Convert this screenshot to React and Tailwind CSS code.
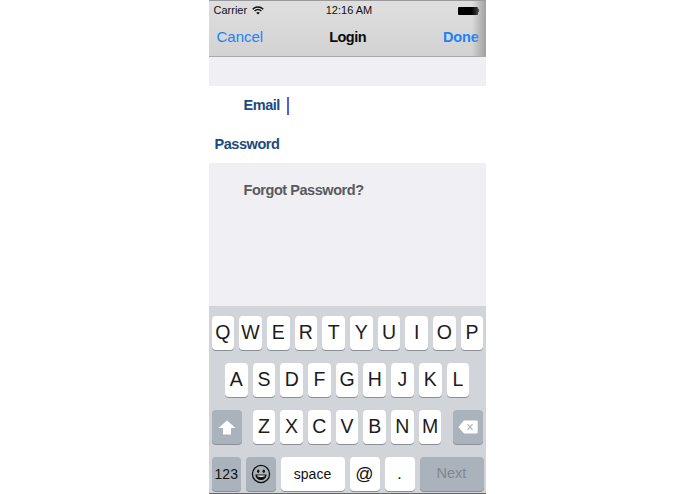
const font = 'font-["Liberation_Sans",Arial,sans-serif]'

function Key({ label, className = '' }) {
  return (
    <div className={`h-[34px] w-[22.7px] shrink-0 rounded-[4px] bg-white shadow-[0_1px_0_#8c9096] flex items-center justify-center text-[19.5px] text-[#1c1c1c] ${className}`}>
      {label}
    </div>
  )
}

function DarkKey({ children, className = '' }) {
  return (
    <div className={`h-[34px] shrink-0 rounded-[4px] bg-[#aab2bb] shadow-[0_1px_0_#8c9096] flex items-center justify-center ${className}`}>
      {children}
    </div>
  )
}

function Wifi() {
  return (
    <svg width="12" height="9" viewBox="0 0 12 9" fill="none" stroke="#111" strokeWidth="1.4">
      <path d="M0.7 3.2C3.8 0.3 8.2 0.3 11.3 3.2" />
      <path d="M2.6 5C4.6 3.2 7.4 3.2 9.4 5" />
      <path d="M6 8.6L4.2 6.7C5.3 5.8 6.7 5.8 7.8 6.7Z" fill="#111" stroke="none" />
    </svg>
  )
}

function Smiley() {
  return (
    <svg width="20" height="20" viewBox="0 0 20 20" fill="none">
      <circle cx="10" cy="10" r="8.6" stroke="#111" strokeWidth="1.3" />
      <ellipse cx="7.2" cy="7.3" rx="1.2" ry="1.7" fill="#111" />
      <ellipse cx="12.8" cy="7.3" rx="1.2" ry="1.7" fill="#111" />
      <path d="M4.4 10.6H15.6C15.4 14.2 13 16.1 10 16.1C7 16.1 4.6 14.2 4.4 10.6Z" fill="#111" />
      <path d="M6 11.6H14C13.7 12.6 12.6 13 10 13C7.4 13 6.3 12.6 6 11.6Z" fill="#fff" />
    </svg>
  )
}

export default function App() {
  return (
    <div className={`w-[695px] h-[494px] bg-white flex justify-center overflow-hidden ${font}`}>
      <div className="w-[277px] ml-[-1px] h-[494px] flex flex-col">
        <div className="relative h-[57px] shrink-0 border-t border-b border-t-[#9a9a9a] border-b-[#a9a9a9] bg-gradient-to-b from-[#dfdfdf] to-[#d2d2d2]">
          <div className="h-[19px] flex items-center justify-between pl-[5px] pr-[5px] text-[11px] text-[#111]">
            <div className="w-[88px] flex items-center gap-[5px]">
              <span>Carrier</span>
              <Wifi />
            </div>
            <span className="font-medium ml-[4px]">12:16 AM</span>
            <div className="w-[88px] flex justify-end pr-[1px]">
              <div className="flex items-center">
                <div className="w-5 h-[8px] bg-black rounded-[1px]"></div>
                <div className="w-[1px] h-[3px] bg-black"></div>
              </div>
            </div>
          </div>
          <div className="h-9 flex items-center justify-between pl-2 pr-[7px] text-[15px]">
            <span className="text-[#1a82fb] mb-[1px]">Cancel</span>
            <span className="font-bold text-[14.5px] tracking-[-0.5px] text-[#0b0b0b] ml-[-3px] mr-[8px]">Login</span>
            <span className="font-bold text-[14.5px] tracking-[-0.2px] text-[#1a82fb]">Done</span>
          </div>
          <div className="absolute inset-y-0 right-0 w-[14px] bg-gradient-to-r from-transparent to-[#a0a0a0]"></div>
        </div>

        <div className="h-[29px] shrink-0 bg-[#efeff4]"></div>

        <div className="h-[77px] shrink-0 bg-white text-[14.5px] tracking-[-0.45px] font-bold text-[#1a4a80]">
          <div className="h-[40px] flex items-center pl-[35px] gap-[7px]">
            <span>Email</span>
            <div className="w-[2px] h-[18px] bg-[#4a62e8]"></div>
          </div>
          <div className="h-[37px] flex items-center pl-[6px] pt-[1px]">Password</div>
        </div>

        <div className="flex-1 bg-[#efeff4] pl-[35px] pt-[19px] text-[14.5px] tracking-[-0.45px] leading-[17px] font-bold text-[#5a5a5e]">
          Forgot Password?
        </div>

        <div className="h-[188px] shrink-0 bg-[#d1d5da] flex flex-col gap-[13px] pt-[10px] border-b border-[#666]">
          <div className="flex gap-[5px] pl-[3px]">
            {'QWERTYUIOP'.split('').map((k) => <Key key={k} label={k} />)}
          </div>
          <div className="flex gap-[5px] pl-[16.5px]">
            {'ASDFGHJKL'.split('').map((k) => <Key key={k} label={k} />)}
          </div>
          <div className="flex pl-[3px] pr-[3px] justify-between">
            <DarkKey className="w-[30px]">
              <svg width="18" height="15" viewBox="0 0 18 15"><path d="M9 0.5L17.5 8H13V14.5H5V8H0.5Z" fill="#fff" /></svg>
            </DarkKey>
            <div className="flex gap-[5px]">
              {'ZXCVBNM'.split('').map((k) => <Key key={k} label={k} />)}
            </div>
            <DarkKey className="w-[30px]">
              <svg width="20" height="14" viewBox="0 0 20 14">
                <path d="M6 0.5H18.5C19.3 0.5 19.7 1 19.7 1.7V12.3C19.7 13 19.3 13.5 18.5 13.5H6L0.3 7Z" fill="#fff" />
                <path d="M9.5 4.2L14.5 9.8M14.5 4.2L9.5 9.8" stroke="#aab2bb" strokeWidth="1.2" />
              </svg>
            </DarkKey>
          </div>
          <div className="flex gap-[5px] pl-[3px] pr-[2px]">
            <DarkKey className="w-[29.5px] text-[14px] text-[#111]">123</DarkKey>
            <DarkKey className="w-[29.5px]"><Smiley /></DarkKey>
            <div className="h-[34px] w-[64px] rounded-[4px] bg-white shadow-[0_1px_0_#8c9096] flex items-center justify-center text-[14px] text-[#111]">space</div>
            <div className="h-[34px] w-[30px] rounded-[4px] bg-white shadow-[0_1px_0_#8c9096] flex items-center justify-center text-[18px] text-[#111]">@</div>
            <div className="h-[34px] w-[30px] rounded-[4px] bg-white shadow-[0_1px_0_#8c9096] flex items-center justify-center text-[16px] text-[#111]">.</div>
            <DarkKey className="flex-1 text-[14.5px] text-[#7f8790]">Next</DarkKey>
          </div>
        </div>
      </div>
    </div>
  )
}
